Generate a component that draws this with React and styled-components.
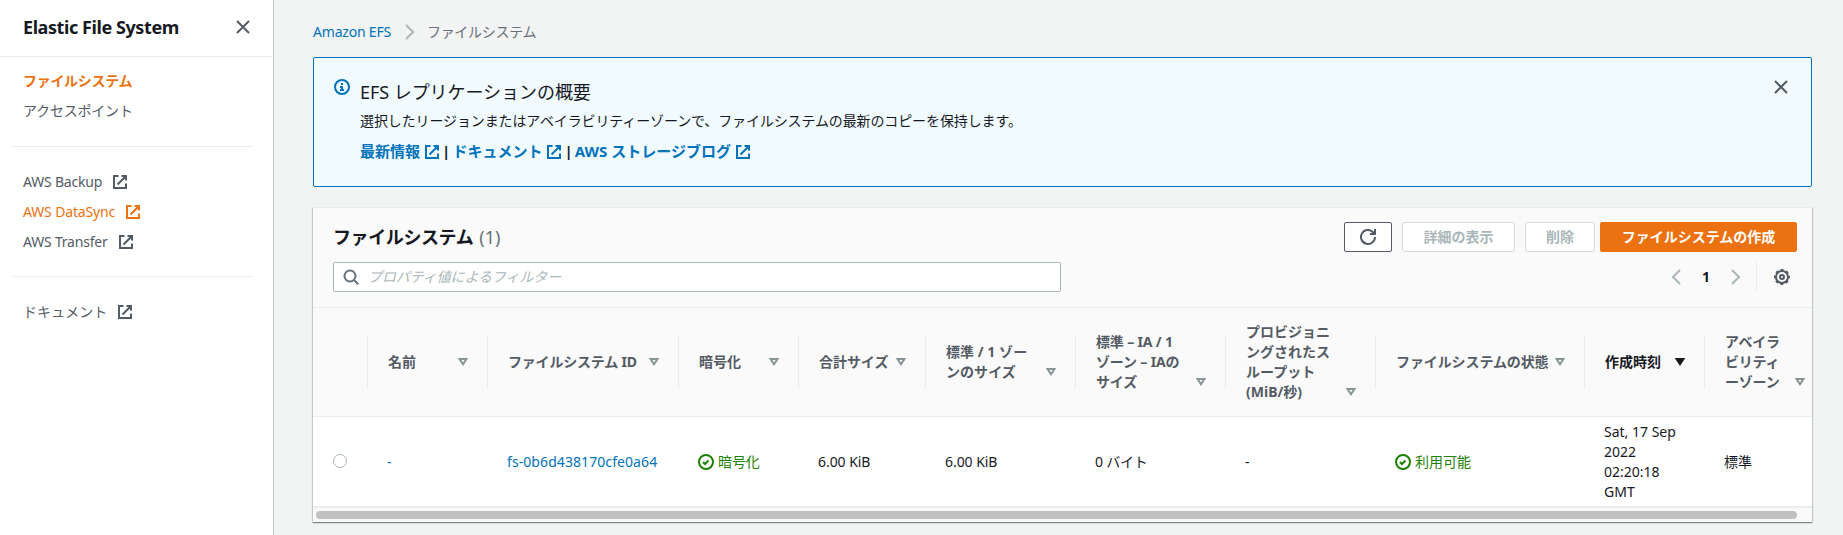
import React from 'react';
import styled, { createGlobalStyle } from 'styled-components';

const c = {
  text: '#16191f', body: '#545b64', muted: '#687078', link: '#0073bb', orange: '#ec7211',
  line: '#eaeded', grey: '#aab7b8', arrow: '#879596', green: '#1d8102',
};

const Global = createGlobalStyle`
  *, *::before, *::after { box-sizing: border-box; }
  body {
    margin: 0; background: #f2f3f3; color: ${c.text}; overflow: hidden;
    font: 14px/20px "Noto Sans", "Noto Sans CJK JP", sans-serif;
  }
`;

const Page = styled.div`display: flex; height: 535px;`;
const Sidebar = styled.aside`
  width: 274px; flex: none; background: #fff; border-right: 1px solid #c4c9c9;
`;
const SideHeader = styled.header`
  height: 57px; padding: 0 22px 3px 23px; display: flex; align-items: center;
  justify-content: space-between; border-bottom: 1px solid ${c.line};
`;
const SideTitle = styled.h2`
  margin: 0; font-size: 18px; line-height: 22px; font-weight: 700; letter-spacing: ${p => p.$ls}px;
  white-space: nowrap;
`;
const Nav = styled.nav`padding-top: 14px; display: flex; flex-direction: column;`;
const NavItem = styled.a`
  height: 20px; margin: 0 23px 10px; display: flex; align-items: center; gap: 10px;
  color: ${p => (p.$active ? c.orange : c.body)}; font-weight: ${p => (p.$bold ? 700 : 400)};
`;
const Divider = styled.hr`
  width: 240px; height: 1px; margin: ${p => p.$top || 15}px 0 25px 13px; border: 0; background: ${c.line};
`;
const Text = styled.span`letter-spacing: ${p => p.$ls || 0}px; white-space: nowrap;`;
const Svg = styled.svg`
  width: 16px; height: 16px; flex: none; display: block; fill: none; stroke: currentColor;
  stroke-width: 2; color: ${p => p.$color || 'inherit'};
`;

const Main = styled.main`flex: 1; min-width: 0; padding: 22px 31px 0 39px;`;
const Crumbs = styled.div`
  height: 20px; display: flex; align-items: center; color: ${c.muted};
  svg { margin: 0 9px 0 11px; }
`;
const Link = styled.a`color: ${c.link}; letter-spacing: ${p => p.$ls || 0}px; white-space: nowrap;`;

const Alert = styled.section`
  height: 130px; margin-top: 15px; padding: 21px 22px 0 20px; display: flex; align-items: flex-start;
  background: #f1faff; border: 1px solid ${c.link}; border-radius: 2px;
`;
const AlertBody = styled.div`flex: 1; margin-left: 10px;`;
const AlertTitle = styled.div`
  height: 27px; font-size: 18px; line-height: 26px; letter-spacing: ${p => p.$ls}px;
`;
const AlertText = styled.p`margin: 5px 0 0; line-height: 20px; letter-spacing: ${p => p.$ls}px;`;
const AlertLinks = styled.div`
  margin-top: 10px; height: 20px; display: flex; align-items: center; font-weight: 700; font-size: 15px;
`;
const AlertLink = styled(Link)`
  display: inline-flex; align-items: center; gap: 4px;
  svg { margin-top: 1px; }
`;
const Bar = styled.span`width: 12.4px; text-align: center; font-weight: 700;`;

const Card = styled.section`
  height: 315px; margin-top: 20px; border-top: 1px solid ${c.line}; background: #fff; overflow: hidden;
  box-shadow: 0 1px 1px 0 rgba(0,28,36,.3), 1px 1px 1px 0 rgba(0,28,36,.15), -1px 1px 1px 0 rgba(0,28,36,.15);
`;
const CardHeader = styled.header`
  height: 100px; padding: 14px 15px 0 20px; background: #fafafa; border-bottom: 1px solid ${c.line};
`;
const HeadRow = styled.div`
  height: 30px; margin-bottom: 10px; display: flex; align-items: center; justify-content: space-between;
`;
const CardTitle = styled.h1`
  margin: 0; font-size: 18px; line-height: 22px; font-weight: 700; display: flex; gap: 6px;
`;
const Counter = styled(Text)`font-weight: 400; color: ${c.muted};`;
const Actions = styled.div`display: flex; gap: 10px;`;
const Button = styled.button`
  width: ${p => p.$width}px; height: 30px; padding: 0; display: flex; align-items: center;
  justify-content: center; font: inherit; font-weight: 700; border-radius: 2px; white-space: nowrap;
  background: ${p => (p.$primary ? c.orange : '#fff')};
  color: ${p => (p.$primary ? '#fff' : p.$off ? c.grey : c.body)};
  border: 1px solid ${p => (p.$primary ? c.orange : p.$off ? '#d5dbdb' : c.body)};
  ${p => p.$primary && 'margin-left: -5px;'}
`;
const Search = styled.label`
  width: 728px; height: 30px; padding-left: 9px; display: flex; align-items: center; gap: 9px;
  background: #fff; border: 1px solid ${c.grey}; border-radius: 2px; color: ${c.grey};
`;
const Placeholder = styled(Text)`font-style: italic;`;
const Pager = styled.div`display: flex; align-items: center; height: 30px; margin-right: 7px;`;
const PageNo = styled.b`width: 44px; text-align: center; font-weight: 700;`;
const PagerLine = styled.i`width: 1px; height: 30px; margin: 0 17px 0 12px; background: ${c.line};`;

const columns = '55px 120px 191px 120px 127px 150px 150px 150px 209px 120px 120px';
const Row = styled.div`
  display: grid; grid-template-columns: ${columns}; width: 1512px; align-items: center;
  height: ${p => (p.$head ? 109 : 91)}px;
  background: ${p => (p.$head ? '#fafafa' : '#fff')};
  border-bottom: ${p => (p.$head ? 1 : 2)}px solid ${c.line};
  padding-top: ${p => (p.$head ? 0 : 1)}px;
`;
const HeadCell = styled.div`
  height: 54px; padding: 0 19px 0 20px; display: flex; align-items: center;
  border-right: 1px solid ${p => (p.$last ? 'transparent' : c.line)};
`;
const HeadInner = styled.div`
  flex: 1; display: flex; align-items: flex-end; justify-content: space-between;
  font-weight: 700; color: ${p => (p.$sorted ? c.text : c.body)}; letter-spacing: ${p => p.$ls || 0}px;
  white-space: nowrap; height: ${p => p.$lines * 20}px;
`;
const Sort = styled.svg`
  width: 10px; height: 8px; flex: none; margin-bottom: 6px; display: block;
  fill: ${p => (p.$sorted ? c.text : 'none')}; stroke: ${p => (p.$sorted ? c.text : c.arrow)};
  stroke-width: 2;
`;
const Cell = styled.div`
  padding-left: ${p => (p.$radio ? 20 : 19)}px; display: flex; align-items: center; gap: 4px;
  color: ${p => (p.$ok ? c.green : c.text)};
`;
const Radio = styled.i`
  width: 14px; height: 14px; margin-bottom: 3px; border: 1px solid ${c.grey}; border-radius: 50%; background: #fff;
`;
const Track = styled.div`height: 14px; padding: 3px 15px 0 3px; background: #fafafa;`;
const Thumb = styled.div`height: 8px; border-radius: 4px; background: #c1c1c1;`;

const External = () => (
  <Svg viewBox="0 0 16 16"><path d="M9.5 2H14v4.5M5.5 10.5L14 2M14 9.5V14H2V2h4.5" /></Svg>
);
const Close = () => <Svg viewBox="0 0 16 16" $color={c.body}><path d="M2 2l12 12M14 2L2 14" /></Svg>;
const Chevron = ({ left }) => (
  <Svg viewBox="0 0 16 16" $color={c.grey}><path d={left ? 'M12 1L5 8l7 7' : 'M4 1l7 7-7 7'} /></Svg>
);
const Check = () => (
  <Svg viewBox="0 0 16 16"><circle cx="8" cy="8" r="7" /><path d="M5 8l2 2 3.5-3.5" /></Svg>
);
const Info = () => (
  <Svg viewBox="0 0 16 16" $color={c.link}><circle cx="8" cy="8" r="7" /><path d="M8 11V8H6M10 11H6M8 6V4" /></Svg>
);
const Refresh = () => (
  <Svg viewBox="0 0 16 16"><path d="M15 8a7 7 0 1 1-2.2-5.1L15 5M15 0v5h-5" /></Svg>
);
const Gear = () => (
  <Svg viewBox="0 0 16 16" $color={c.body}>
    <circle cx="8" cy="8" r="6" />
    <circle cx="8" cy="8" r="7.2" strokeWidth="1.6" strokeDasharray="3 2.655" strokeDashoffset="1.5" />
    <circle cx="8" cy="8" r="2" />
  </Svg>
);

const heads = [
  [['名前'], 0], [['ファイルシステム ID'], -0.2], [['暗号化'], 0], [['合計サイズ'], -0.05],
  [['標準 / 1 ゾー', 'ンのサイズ'], 0.05], [['標準 – IA / 1', 'ゾーン – IAの', 'サイズ'], -0.15],
  [['プロビジョニ', 'ングされたス', 'ループット', '(MiB/秒)'], 0], [['ファイルシステムの状態'], -0.1],
  [['作成時刻'], 0], [['アベイラ', 'ビリティ', 'ーゾーン'], -0.2],
];

export default function App() {
  return (
    <Page>
      <Global />
      <Sidebar>
        <SideHeader><SideTitle $ls={-0.42}>Elastic File System</SideTitle><Close /></SideHeader>
        <Nav>
          <NavItem $active $bold><Text $ls={-0.3}>ファイルシステム</Text></NavItem>
          <NavItem><Text $ls={-0.2}>アクセスポイント</Text></NavItem>
          <Divider />
          <NavItem><Text $ls={-0.2}>AWS Backup</Text><External /></NavItem>
          <NavItem $active><Text $ls={-0.15}>AWS DataSync</Text><External /></NavItem>
          <NavItem><Text $ls={-0.2}>AWS Transfer</Text><External /></NavItem>
          <Divider $top={14} />
          <NavItem><Text $ls={0.05}>ドキュメント</Text><External /></NavItem>
        </Nav>
      </Sidebar>
      <Main>
        <Crumbs><Link $ls={-0.2}>Amazon EFS</Link><Chevron /><Text $ls={-0.3}>ファイルシステム</Text></Crumbs>
        <Alert>
          <Info />
          <AlertBody>
            <AlertTitle $ls={-0.05}>EFS レプリケーションの概要</AlertTitle>
            <AlertText $ls={-0.12}>選択したリージョンまたはアベイラビリティーゾーンで、ファイルシステムの最新のコピーを保持します。</AlertText>
            <AlertLinks>
              <AlertLink>最新情報<External /></AlertLink><Bar>|</Bar>
              <AlertLink>ドキュメント<External /></AlertLink><Bar>|</Bar>
              <AlertLink>AWS ストレージブログ<External /></AlertLink>
            </AlertLinks>
          </AlertBody>
          <Close />
        </Alert>
        <Card>
          <CardHeader>
            <HeadRow>
              <CardTitle><Text $ls={-0.4}>ファイルシステム</Text><Counter>(1)</Counter></CardTitle>
              <Actions>
                <Button $width={48}><Refresh /></Button>
                <Button $width={113} $off>詳細の表示</Button>
                <Button $width={70} $off>削除</Button>
                <Button $width={197} $primary>ファイルシステムの作成</Button>
              </Actions>
            </HeadRow>
            <HeadRow>
              <Search>
                <Svg viewBox="0 0 16 16" $color={c.muted}><circle cx="7" cy="7" r="5.5" /><path d="M11 11l4.3 4.3" /></Svg>
                <Placeholder $ls={-0.1}>プロパティ値によるフィルター</Placeholder>
              </Search>
              <Pager>
                <Chevron left /><PageNo>1</PageNo><Chevron /><PagerLine />
                <Gear />
              </Pager>
            </HeadRow>
          </CardHeader>
          <Row $head>
            <HeadCell />
            {heads.map(([lines, ls], i) => (
              <HeadCell key={i} $last={i === 9}>
                <HeadInner $lines={lines.length} $ls={ls} $sorted={i === 8}>
                  <div>{lines.map(l => <div key={l}>{l}</div>)}</div>
                  <Sort viewBox="0 0 10 8" $sorted={i === 8}><path d="M1.6 1h6.8L5 6.2z" /></Sort>
                </HeadInner>
              </HeadCell>
            ))}
          </Row>
          <Row>
            <Cell $radio><Radio /></Cell>
            <Cell><Link>-</Link></Cell>
            <Cell><Link $ls={0.08}>fs-0b6d438170cfe0a64</Link></Cell>
            <Cell $ok><Check /><Text $ls={-0.1}>暗号化</Text></Cell>
            <Cell><Text $ls={-0.05}>6.00 KiB</Text></Cell>
            <Cell><Text $ls={-0.05}>6.00 KiB</Text></Cell>
            <Cell><Text $ls={-0.2}>0 バイト</Text></Cell>
            <Cell><Text>-</Text></Cell>
            <Cell $ok><Check /><Text>利用可能</Text></Cell>
            <Cell><Text>Sat, 17 Sep<br />2022<br />02:20:18<br />GMT</Text></Cell>
            <Cell><Text>標準</Text></Cell>
          </Row>
          <Track><Thumb /></Track>
        </Card>
      </Main>
    </Page>
  );
}
